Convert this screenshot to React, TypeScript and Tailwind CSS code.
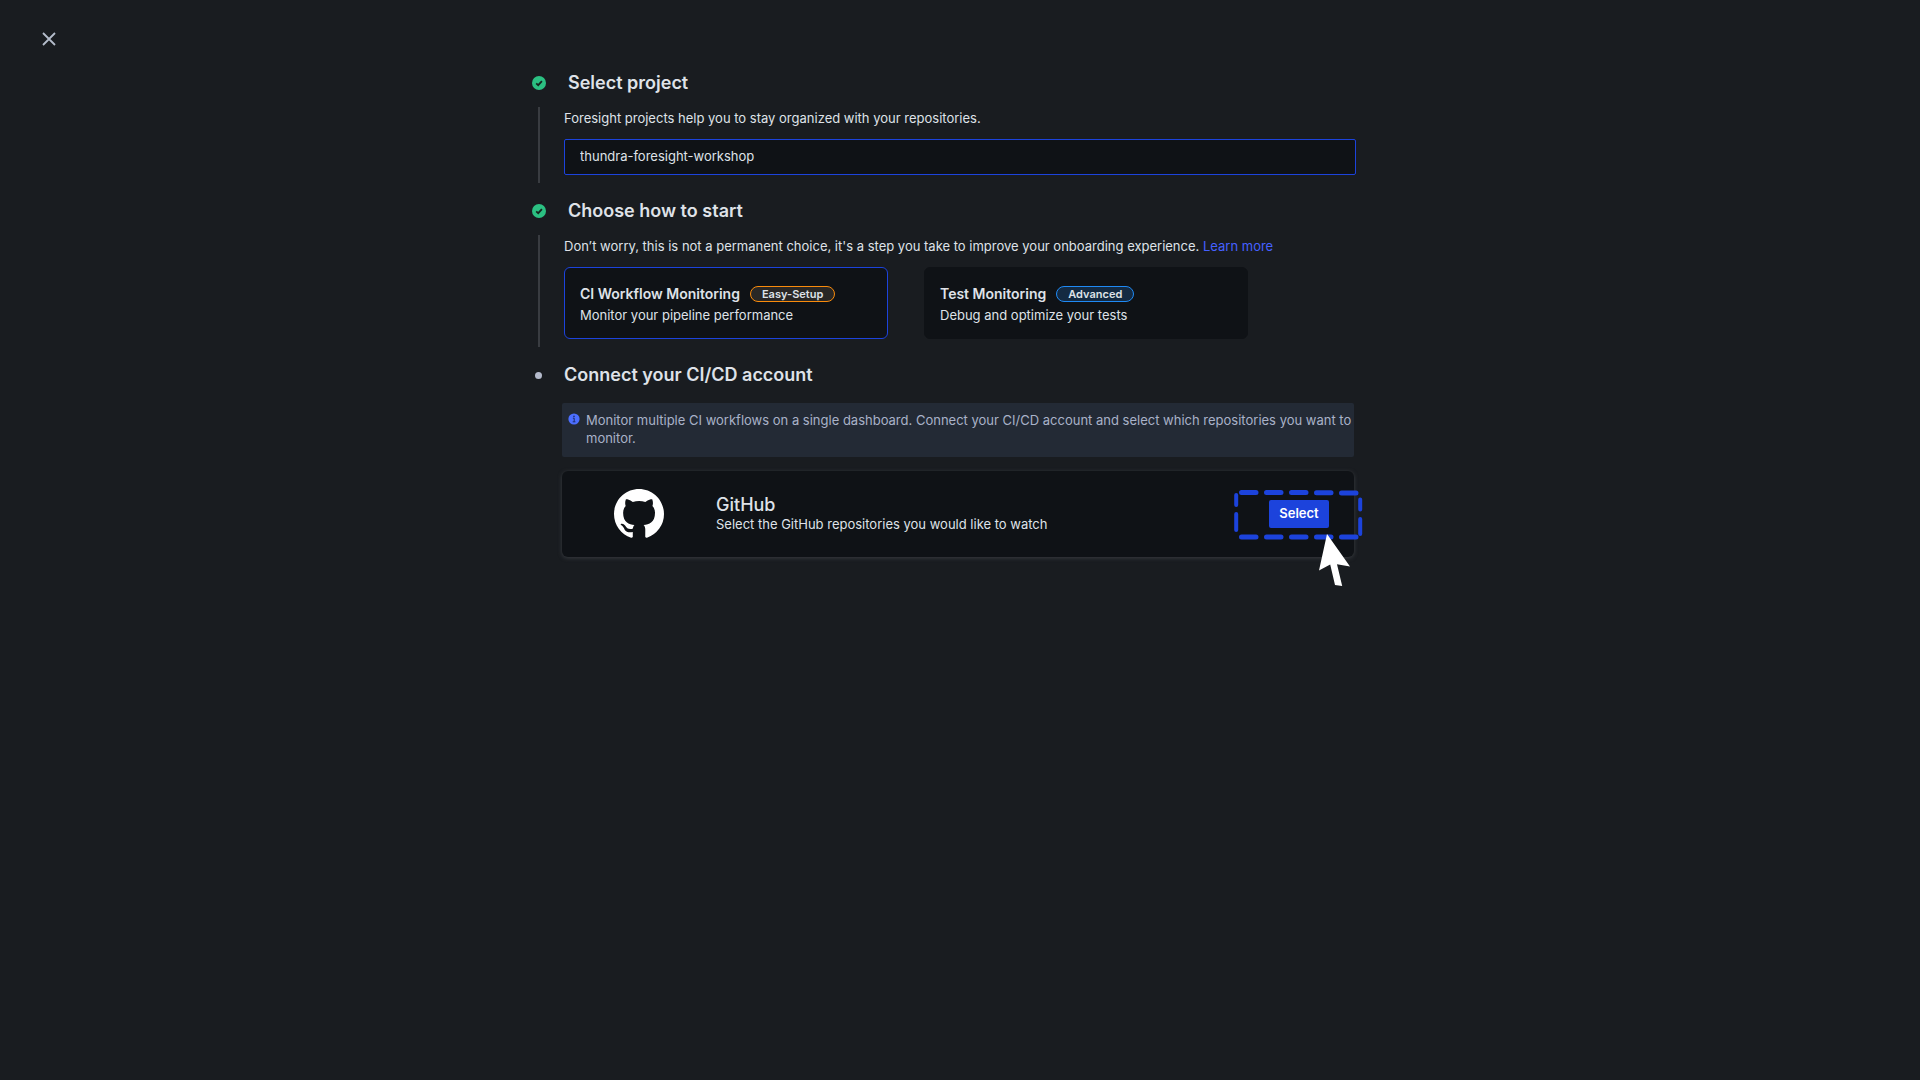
import type { ReactNode } from "react";

function CheckIcon() {
  return (
    <svg viewBox="0 0 14 14" className="size-3.5" aria-hidden="true">
      <circle cx="7" cy="7" r="7" fill="#2bc082" />
      <path d="M4.2 7.4 L6.2 9.2 L9.9 5.2" fill="none" stroke="#15251f" strokeWidth="1.8" />
    </svg>
  );
}

function InfoIcon() {
  return (
    <svg viewBox="0 0 12 12" className="mt-0.5 size-3 shrink-0" aria-hidden="true">
      <circle cx="6" cy="6" r="5.6" fill="#4c6fff" />
      <circle cx="6" cy="3.4" r="0.8" fill="#1d2a6b" />
      <path d="M4.9 5.2 H6.2 V8.6 M4.7 8.8 H7.4" fill="none" stroke="#1d2a6b" strokeWidth="1" />
    </svg>
  );
}

function GitHubLogo() {
  return (
    <svg viewBox="0 0 16 16" className="size-[50px]" fill="#ffffff" role="img" aria-label="GitHub logo">
      <path d="M8 0C3.58 0 0 3.58 0 8c0 3.54 2.29 6.53 5.47 7.59.4.07.55-.17.55-.38 0-.19-.01-.82-.01-1.49-2.01.37-2.53-.49-2.69-.94-.09-.23-.48-.94-.82-1.13-.28-.15-.68-.52-.01-.53.63-.01 1.08.58 1.23.82.72 1.21 1.87.87 2.33.66.07-.52.28-.87.51-1.07-1.78-.2-3.64-.89-3.64-3.95 0-.87.31-1.59.82-2.15-.08-.2-.36-1.02.08-2.12 0 0 .67-.21 2.2.82.64-.18 1.32-.27 2-.27s1.36.09 2 .27c1.53-1.04 2.2-.82 2.2-.82.44 1.1.16 1.92.08 2.12.51.56.82 1.27.82 2.15 0 3.07-1.87 3.75-3.65 3.95.29.25.54.73.54 1.48 0 1.07-.01 1.93-.01 2.2 0 .21.15.46.55.38A8.01 8.01 0 0 0 16 8c0-4.42-3.58-8-8-8z" />
    </svg>
  );
}

function Highlight() {
  return (
    <svg
      viewBox="0 0 130 100"
      className="pointer-events-none absolute -top-2.5 -left-[35px] h-[100px] w-[130px] max-w-none"
      aria-hidden="true"
    >
      <g stroke="#1c43dc" strokeLinecap="round" fill="none">
        <path strokeWidth="5" d="M7.5 2.5H22 M32.5 2.5H47 M57.5 2.5H72 M82.5 2.8H97 M107.5 3H122" />
        <path strokeWidth="5" d="M7.5 47H22 M32.5 47H47 M57.5 47H72 M82.5 47H97 M107.5 47H122" />
        <path strokeWidth="4" d="M2.2 5V15 M2.2 24V40 M126.2 9.5V19.5 M126.2 29V44" />
      </g>
      <path fill="#ffffff" d="M93 44 L116 76.5 L103 74.2 L108.2 96 L101 95 L96.2 74.4 L85 80.5 Z" />
    </svg>
  );
}

function StepHeader({ marker, title, tight }: { marker: ReactNode; title: string; tight?: boolean }) {
  return (
    <div className="flex h-6 items-center">
      <span className="flex w-3.5 justify-center">{marker}</span>
      <h2 className={`${tight ? "ml-[18px]" : "ml-[22px]"} text-lg leading-6 font-semibold`}>{title}</h2>
    </div>
  );
}

function StepBody({ children }: { children: ReactNode }) {
  return (
    <div className="mt-3 mb-4 flex">
      <div className="ml-1.5 w-0.5 shrink-0 bg-[#393c41]" />
      <div className="ml-6 min-w-0 flex-1 pb-2">{children}</div>
    </div>
  );
}

type OptionProps = { title: string; badge: string; text: string; frame: string; badgeStyle: string; selected: boolean };

function Option({ title, badge, text, frame, badgeStyle, selected }: OptionProps) {
  return (
    <button
      type="button"
      aria-pressed={selected}
      className={`flex h-[72px] flex-1 flex-col justify-center rounded-md border bg-[#0f1216] px-[15px] pt-0.5 text-left ${frame}`}
    >
      <span className="flex items-center gap-2.5">
        <span className="text-sm leading-[22px] font-semibold">{title}</span>
        <span className={`flex h-4 items-center rounded-full border px-[11px] pb-px text-[11px] leading-3 font-semibold ${badgeStyle}`}>
          {badge}
        </span>
      </span>
      <span className="text-[13px] leading-5">{text}</span>
    </button>
  );
}

export default function App() {
  return (
    <div className="relative min-h-screen bg-[#191c20] pt-[71px] font-['Inter',sans-serif] text-[#dfe2e8]">
      <button type="button" aria-label="Close" className="absolute top-[27px] left-[37px] flex size-6 items-center justify-center">
        <svg viewBox="0 0 14 14" className="size-3.5" aria-hidden="true">
          <path d="M1 1 L13 13 M13 1 L1 13" stroke="#b4bccb" strokeWidth="1.8" fill="none" />
        </svg>
      </button>

      <main className="mx-auto max-w-[856px] pr-8">
        <section>
          <StepHeader marker={<CheckIcon />} title="Select project" />
          <StepBody>
            <label htmlFor="project" className="block pt-px text-[13px] leading-5">
              Foresight projects help you to stay organized with your repositories.
            </label>
            <input
              id="project"
              type="text"
              defaultValue="thundra-foresight-workshop"
              className="mt-[11px] block h-9 w-full rounded-xs border border-[#1c43dc] bg-[#0f1216] px-[15px] pb-0.5 text-[13px] outline-none"
            />
          </StepBody>
        </section>

        <section>
          <StepHeader marker={<CheckIcon />} title="Choose how to start" />
          <StepBody>
            <p className="pt-px text-[13px] leading-5">
              Don’t worry, this is not a permanent choice, it's a step you take to improve your onboarding experience.{" "}
              <a href="#learn-more" className="text-[#4560ff]">
                Learn more
              </a>
            </p>
            <div className="mt-[11px] mr-[108px] flex gap-9">
              <Option
                selected
                title="CI Workflow Monitoring"
                badge="Easy-Setup"
                text="Monitor your pipeline performance"
                frame="border-[#1c43dc]"
                badgeStyle="border-[#f98b0c] bg-[#292725]"
              />
              <Option
                selected={false}
                title="Test Monitoring"
                badge="Advanced"
                text="Debug and optimize your tests"
                frame="border-[#0f1216]"
                badgeStyle="border-[#1f8af5] bg-[#142a42]"
              />
            </div>
          </StepBody>
        </section>

        <section>
          <StepHeader marker={<span className="mr-px size-[7px] rounded-full bg-[#b4bacb]" />} title="Connect your CI/CD account" tight />
          <div className="mt-4 mr-0.5 ml-[30px]">
            <div className="flex h-[54px] gap-1.5 rounded-xs bg-[#232a35] pt-2 pl-1.5 text-[13px] leading-[18px] text-[#a9b2c8]">
              <InfoIcon />
              <p>
                Monitor multiple CI workflows on a single dashboard. Connect your CI/CD account and select which
                repositories you want to monitor.
              </p>
            </div>
            <div className="mt-3.5 flex h-[86px] items-center rounded-md bg-[#0f1216] pr-[25px] pl-[52px] shadow-[0_1px_4px_#3a3d42]">
              <GitHubLogo />
              <div className="ml-[52px] flex-1">
                <h3 className="text-lg leading-5 font-medium">GitHub</h3>
                <p className="text-[13px] leading-[18px]">Select the GitHub repositories you would like to watch</p>
              </div>
              <div className="relative">
                <button type="button" className="h-7 w-[60px] rounded-xs bg-[#1c43dc] text-[13px] font-semibold text-white">
                  Select
                </button>
                <Highlight />
              </div>
            </div>
          </div>
        </section>
      </main>
    </div>
  );
}
